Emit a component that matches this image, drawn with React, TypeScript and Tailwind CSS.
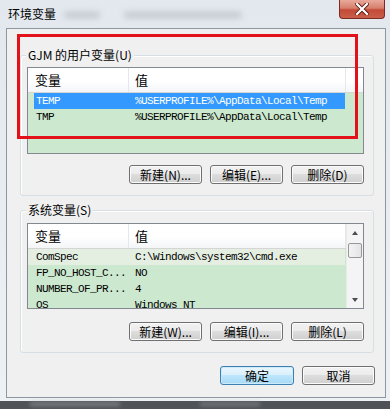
import React from "react";

const cjk = "font-['Noto_Sans_CJK_SC',sans-serif]";
const mono = "font-['Liberation_Mono','Noto_Sans_CJK_SC',monospace] text-[11px] tracking-[-0.6px]";

function Btn({ label, primary }: { label: string; primary?: boolean }) {
  return (
    <button
      className={
        primary
          ? `w-[74px] h-[19px] rounded-[3px] border border-[#3c7fb1] bg-[linear-gradient(to_bottom,#eaf6fd_0%,#d9f0fc_49%,#bee6fd_50%,#a7d9f5_100%)] shadow-[inset_0_0_0_1px_#cdeafb] text-[12px] leading-none text-black ${cjk}`
          : `w-[73px] h-[19px] rounded-[3px] border border-[#707070] bg-[linear-gradient(to_bottom,#f2f2f2_0%,#ebebeb_49%,#dddddd_50%,#cfcfcf_100%)] shadow-[inset_0_0_0_1px_#fbfbfb] text-[12px] leading-none text-black ${cjk}`
      }
    >
      {label}
    </button>
  );
}

function Header({ withExtra }: { withExtra?: boolean }) {
  return (
    <div className={`h-[25px] flex border-b border-[#d5d5d5] bg-[linear-gradient(to_bottom,#ffffff_0%,#ffffff_55%,#f3f5f7_100%)] text-[13px] text-black ${cjk}`}>
      <div className="w-[101px] pl-[7px] flex items-center border-r border-[#e3e8ee]">变量</div>
      <div className="w-[217px] pl-[6px] flex items-center border-r border-[#e3e8ee]">值</div>
      {withExtra && <div className="flex-1" />}
    </div>
  );
}

type Row = { name: string; value: string; selected?: boolean; light?: boolean };

function Rows({ rows }: { rows: Row[] }) {
  return (
    <div className={mono}>
      {rows.map((r) => (
        <div key={r.name} className={`h-[16px] flex items-center w-[317px] ${r.light ? "bg-[#e4efe2]" : ""}`}>
          <div
            className={`ml-[6px] w-[311px] h-full flex items-center whitespace-nowrap ${
              r.selected ? "bg-[#3399ff] text-white" : "text-black"
            }`}
          >
            <span className="w-[95px] pl-[2px] shrink-0">{r.name}</span>
            <span className="pl-[6px]">{r.value}</span>
          </div>
        </div>
      ))}
    </div>
  );
}

function Group({ label, children, pt }: { label: string; children: React.ReactNode; pt: string }) {
  return (
    <div className={`relative ml-[13px] w-[354px] rounded-[3px] border border-[#d5dfe5] shadow-[inset_1px_1px_0_#ffffff] pl-[6px] pr-[9px] pb-[11px] ${pt}`}>
      <span className={`absolute left-[5px] -top-[9px] bg-[#f0f0f0] px-[2px] text-[12px] leading-[16px] text-black ${cjk}`}>
        {label}
      </span>
      {children}
    </div>
  );
}

function Scrollbar() {
  return (
    <div className="w-[17px] h-full bg-[#f4f4f4] border-l border-[#eaeaea] flex flex-col items-center">
      <div className="h-[17px] flex items-center justify-center">
        <div className="w-0 h-0 border-l-[3px] border-r-[3px] border-b-[4px] border-l-transparent border-r-transparent border-b-[#4d4d4d]" />
      </div>
      <div className="mt-[2px] w-[14px] h-[15px] rounded-[2px] border border-[#979797] bg-[linear-gradient(to_right,#f3f3f3,#e4e4e4)]" />
      <div className="flex-1" />
      <div className="h-[17px] flex items-center justify-center">
        <div className="w-0 h-0 border-l-[3px] border-r-[3px] border-t-[4px] border-l-transparent border-r-transparent border-t-[#4d4d4d]" />
      </div>
    </div>
  );
}

export default function App() {
  return (
    <div className="relative w-[390px] h-[409px] overflow-hidden bg-[#4f5256]">
      <div className="bg-[linear-gradient(to_bottom,#e3e8ee,#eef1f4)] h-[401px] flex flex-col">
        {/* title bar */}
        <div className="relative h-[28px] shrink-0">
          <span className={`absolute left-[8px] top-[6px] text-[12px] leading-[16px] text-black ${cjk}`}>环境变量</span>
          <div className="absolute left-[64px] top-[12px] w-[36px] h-[6px] rounded-full bg-[#8b939c] opacity-40 blur-[3px]" />
          <div className="absolute left-[124px] top-[12px] w-[118px] h-[6px] rounded-full bg-[#8b939c] opacity-40 blur-[3px]" />
          <div className="absolute left-[339px] top-0 w-[46px] h-[19px] rounded-b-[4px] border border-t-0 border-[#7c2a22] bg-[linear-gradient(to_bottom,#e9a99a_0%,#d7806e_45%,#c34a36_55%,#c9604a_100%)] flex items-center justify-center">
            <svg width="14" height="12" viewBox="0 0 14 12">
              <path d="M2 1 L12 11 M12 1 L2 11" stroke="#5a1a12" strokeWidth="4" strokeLinecap="square" />
              <path d="M2 1 L12 11 M12 1 L2 11" stroke="#ffffff" strokeWidth="2.2" strokeLinecap="square" />
            </svg>
          </div>
        </div>

        {/* client area */}
        <div className="ml-[6px] w-[380px] h-[370px] border border-[#8d97a1] bg-[#f0f0f0] flex flex-col">
          <div className="mt-[26px]">
            <Group label="GJM 的用户变量(U)" pt="pt-[11px]">
              <div className="h-[87px] border border-[#828790] bg-[#cce8cf]">
                <Header withExtra />
                <Rows
                  rows={[
                    { name: "TEMP", value: "%USERPROFILE%\\AppData\\Local\\Temp", selected: true },
                    { name: "TMP", value: "%USERPROFILE%\\AppData\\Local\\Temp" },
                  ]}
                />
              </div>
              <div className="mt-[11px] flex justify-end gap-[8px]">
                <Btn label="新建(N)..." />
                <Btn label="编辑(E)..." />
                <Btn label="删除(D)" />
              </div>
            </Group>
          </div>

          <div className="mt-[14px]">
            <Group label="系统变量(S)" pt="pt-[12px]">
              <div className="h-[86px] border border-[#828790] bg-[#cce8cf] flex overflow-hidden">
                <div className="w-[318px]">
                  <Header />
                  <Rows
                    rows={[
                      { name: "ComSpec", value: "C:\\Windows\\system32\\cmd.exe", light: true },
                      { name: "FP_NO_HOST_C...", value: "NO" },
                      { name: "NUMBER_OF_PR...", value: "4" },
                      { name: "OS", value: "Windows_NT" },
                    ]}
                  />
                </div>
                <Scrollbar />
              </div>
              <div className="mt-[13px] flex justify-end gap-[8px]">
                <Btn label="新建(W)..." />
                <Btn label="编辑(I)..." />
                <Btn label="删除(L)" />
              </div>
            </Group>
          </div>

          <div className="mt-[13px] ml-[213px] flex gap-[8px]">
            <Btn label="确定" primary />
            <Btn label="取消" />
          </div>
        </div>
      </div>

      {/* bottom shadow smudges */}
      <div className="absolute left-[30px] top-[402px] w-[90px] h-[4px] bg-[#9a9ea3] blur-[2px] opacity-60" />
      <div className="absolute left-[200px] top-[402px] w-[60px] h-[4px] bg-[#9a9ea3] blur-[2px] opacity-50" />

      {/* red annotation */}
      <div className="absolute left-[17px] top-[34px] w-[341px] h-[105px] border-[3px] border-[#e3121a] pointer-events-none" />
    </div>
  );
}
